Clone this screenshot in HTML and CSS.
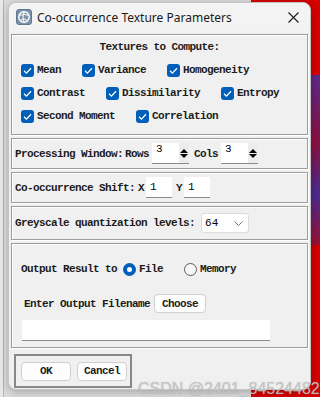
FILE: index.html
```html
<!DOCTYPE html>
<html lang="en">
  <head>
    <meta charset="UTF-8" />
    <title>Co-occurrence Texture Parameters</title>
    <link rel="stylesheet" href="styles.css">
  </head>
  <body>
    <div class="window">
      <div class="titlebar">
        <svg class="app-icon" width="16" height="16" viewBox="0 0 16 16">
          <rect x="0.5" y="0.5" width="15" height="15" rx="2.5" fill="#7b93ab" stroke="#5f7890" />
          <circle cx="8" cy="8" r="5.2" fill="none" stroke="#fff" stroke-width="1.4" />
          <path d="M3.5 6.5 Q8 4 12.5 6.5 M5 11 Q8 8.5 11.5 11.5 M8 3 Q6 8 8 13" fill="none" stroke="#fff" stroke-width="1" />
        </svg>
        <span class="title">Co-occurrence Texture Parameters</span>
        <svg class="close" width="11" height="11" viewBox="0 0 11 11">
          <path d="M0.5 0.5 L10.5 10.5 M10.5 0.5 L0.5 10.5" stroke="#1a1a1a" stroke-width="1.1" />
        </svg>
      </div>

      <div class="content">
        <!-- textures -->
        <div class="frame textures">
          <div class="frame-title lbl">Textures to Compute:</div>
          <div class="check-row">
            <label class="check lbl"><span class="box"></span>Mean</label>
            <label class="check lbl"><span class="box"></span>Variance</label>
            <label class="check lbl"><span class="box"></span>Homogeneity</label>
          </div>
          <div class="check-row">
            <label class="check lbl"><span class="box"></span>Contrast</label>
            <label class="check lbl"><span class="box"></span>Dissimilarity</label>
            <label class="check lbl"><span class="box"></span>Entropy</label>
          </div>
          <div class="check-row">
            <label class="check lbl"><span class="box"></span>Second Moment</label>
            <label class="check lbl"><span class="box"></span>Correlation</label>
          </div>
        </div>

        <!-- processing window -->
        <div class="frame row-frame">
          <span class="lbl">Processing Window:</span>
          <span class="lbl tight">Rows</span>
          <div class="spin">
            <span class="val">3</span>
            <span class="arrows"><i class="up"></i><i class="down"></i></span>
          </div>
          <span class="lbl tight">Cols</span>
          <div class="spin">
            <span class="val">3</span>
            <span class="arrows"><i class="up"></i><i class="down"></i></span>
          </div>
        </div>

        <!-- shift -->
        <div class="frame row-frame">
          <span class="lbl">Co-occurrence Shift:</span>
          <span class="lbl axis">X</span>
          <div class="entry small"><span class="val">1</span></div>
          <span class="lbl axis y">Y</span>
          <div class="entry small"><span class="val">1</span></div>
        </div>

        <!-- levels -->
        <div class="frame row-frame levels">
          <span class="lbl">Greyscale quantization levels:</span>
          <div class="combo">
            <span class="val">64</span>
            <svg width="9" height="5" viewBox="0 0 9 5">
              <path d="M0.5 0.5 L4.5 4.5 L8.5 0.5" fill="none" stroke="#777" stroke-width="1" />
            </svg>
          </div>
        </div>

        <!-- output -->
        <div class="frame output">
          <div class="out-row">
            <span class="lbl">Output Result to</span>
            <label class="radio lbl"><span class="dot on"></span>File</label>
            <label class="radio lbl memory"><span class="dot"></span>Memory</label>
          </div>
          <div class="file-row">
            <span class="lbl">Enter Output Filename</span>
            <button class="btn lbl choose">Choose</button>
          </div>
          <div class="entry filename"></div>
        </div>

        <!-- buttons -->
        <div class="frame buttons">
          <button class="btn lbl">OK</button>
          <button class="btn lbl">Cancel</button>
        </div>
      </div>
    </div>
    <div class="watermark">CSDN @2401_84524482</div>
  </body>
</html>
```

FILE: styles.css
```css
* {
  margin: 0;
  padding: 0;
  box-sizing: border-box;
}

html {
  background:
    linear-gradient(170deg, #5a2a8a, #8a1040 40%, #4a2a90 70%, #9a1030) 311px 75px / 9px 170px no-repeat,
    linear-gradient(to right, #e8e8e8 0 3px, #b4b4b4 3px 4px, #dcdcdc 4px 251px, #d60000 251px);
}

body {
  width: 320px;
  height: 397px;
  overflow: hidden;
  position: relative;
  font-family: "Liberation Mono", monospace;
  color: #000;
}

.window {
  margin: 2px 0 0 8px;
  width: 303px;
  height: 388px;
  background: #f0f0f0;
  border: 1px solid #c4c4c4;
  border-radius: 8px;
  box-shadow: 0 2px 8px rgba(0, 0, 0, 0.25);
  overflow: hidden;
}

.titlebar {
  height: 28px;
  display: flex;
  align-items: center;
  padding-left: 7px;
  background: #f3f3f3;
}

.app-icon {
  flex: none;
}

.title {
  margin-left: 5px;
  font-family: "Noto Sans", sans-serif;
  font-size: 12px;
  color: #1a1a1a;
  flex: 1;
}

.close {
  margin-right: 11px;
}

.content {
  padding: 3px 2px 0;
  display: flex;
  flex-direction: column;
  gap: 3px;
}

.lbl {
  font-family: "Liberation Mono", monospace;
  font-weight: bold;
  font-size: 11px;
  letter-spacing: -0.6px;
  line-height: 14px;
  white-space: nowrap;
  color: #1c1c1c;
}

.frame {
  border: 1px solid #9c9c9c;
  box-shadow: inset 1px 1px 0 #fff, 1px 1px 0 #fff;
}

/* textures */
.textures {
  height: 101px;
  padding: 5px 0 0 9px;
  display: flex;
  flex-direction: column;
  gap: 5px;
}

.frame-title {
  text-align: center;
  margin-left: -9px;
  margin-bottom: 2px;
}

.check-row {
  display: flex;
  gap: 21px;
  height: 18px;
  align-items: center;
}

.check {
  display: flex;
  align-items: center;
  gap: 3px;
}

.box {
  width: 13px;
  height: 13px;
  border-radius: 3px;
  background: #005fb8 url("data:image/svg+xml,%3Csvg xmlns='http://www.w3.org/2000/svg' width='13' height='13'%3E%3Cpath d='M3 6.8 L5.4 9.1 L10 4.2' fill='none' stroke='white' stroke-width='1.3'/%3E%3C/svg%3E") center / 13px 13px no-repeat;
  flex: none;
}

/* single line frames */
.row-frame {
  height: 31px;
  display: flex;
  align-items: center;
  padding-left: 3px;
}

.levels {
  height: 34px;
}

.tight {
  margin-left: 2px;
  margin-right: 3px;
}

.spin {
  width: 37px;
  height: 21px;
  background: #fff;
  border-bottom: 1px solid #8a8a8a;
  display: flex;
  margin-right: 3px;
}

.val {
  font-family: "Liberation Mono", monospace;
  font-size: 11px;
  line-height: 13px;
  padding-left: 4px;
  flex: 1;
}

.arrows {
  width: 10px;
  background: #ececec;
  display: flex;
  flex-direction: column;
  align-items: center;
  justify-content: center;
  gap: 1px;
}

.arrows i {
  width: 0;
  height: 0;
  border-left: 4px solid transparent;
  border-right: 4px solid transparent;
}

.arrows .up {
  border-bottom: 4px solid #000;
}

.arrows .down {
  border-top: 4px solid #000;
}

.axis {
  margin: 0 2px 0 3px;
}

.axis.y {
  margin-left: 4px;
}

.entry {
  background: #fff;
  border-bottom: 1px solid #8a8a8a;
}

.entry.small {
  width: 26px;
  height: 21px;
}

.combo {
  width: 48px;
  height: 20px;
  margin-left: 6px;
  background: #fff;
  border: 1px solid #dcdcdc;
  border-radius: 3px;
  display: flex;
  align-items: center;
  padding-right: 5px;
}

.combo .val {
  line-height: 18px;
  padding-left: 3px;
}

/* output */
.output {
  height: 105px;
  padding: 17px 0 0 9px;
}

.out-row {
  display: flex;
  align-items: center;
  height: 16px;
}

.radio {
  display: flex;
  align-items: center;
  gap: 3px;
  margin-left: 6px;
}

.radio.memory {
  margin-left: 21px;
}

.dot {
  width: 13px;
  height: 13px;
  border-radius: 50%;
  border: 1px solid #5c5c5c;
  background: #f7f7f7;
}

.dot.on {
  border: 4px solid #005fb8;
  background: #fff;
}

.file-row {
  display: flex;
  align-items: center;
  margin-top: 17px;
  padding-left: 3px;
}

.btn {
  background: #fdfdfd;
  border: 1px solid #d0d0d0;
  border-radius: 4px;
  height: 19px;
  width: 50px;
}

.choose {
  width: 52px;
  margin-left: 4px;
}

.filename {
  margin-top: 7px;
  margin-left: 1px;
  width: 248px;
  height: 21px;
}

/* buttons */
.buttons {
  margin-top: 3px;
  width: 118px;
  height: 34px;
  margin-left: 3px;
  display: flex;
  align-items: center;
  gap: 6px;
  padding-left: 5px;
  border: 2px solid #888;
  box-shadow: none;
}

.watermark {
  position: absolute;
  left: 138px;
  top: 380px;
  font-family: "Liberation Sans", sans-serif;
  font-size: 16px;
  color: rgba(200, 200, 200, 0.9);
  text-shadow: 0 0 1px rgba(120, 120, 120, 0.5);
  white-space: nowrap;
}
```
